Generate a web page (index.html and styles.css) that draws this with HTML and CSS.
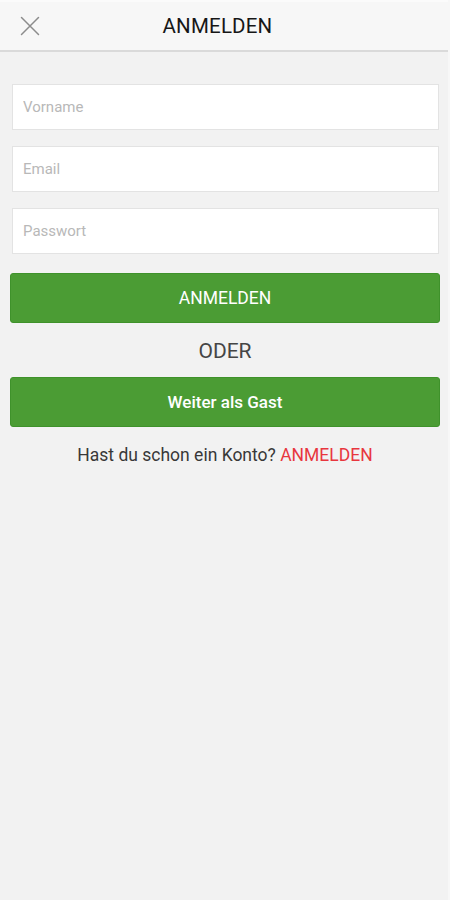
FILE: index.html
```html
<!DOCTYPE html>
<html lang="de">
<head>
<meta charset="utf-8">
<title>Anmelden</title>
<link rel="stylesheet" href="styles.css">
</head>
<body>
<div class="app">
  <header class="topbar">
    <button class="close" aria-label="Schließen">
      <svg width="20" height="20" viewBox="0 0 20 20"><path d="M1.5 1.5 L18.5 18.5 M18.5 1.5 L1.5 18.5" stroke="#8c8c8c" stroke-width="1.5" fill="none" stroke-linecap="round"/></svg>
    </button>
    <h1 class="title">ANMELDEN</h1>
    <span class="spacer"></span>
  </header>
  <main class="form">
    <div class="fields">
      <input class="field" type="text" placeholder="Vorname">
      <input class="field" type="email" placeholder="Email">
      <input class="field" type="password" placeholder="Passwort">
    </div>
    <button class="btn btn-caps">ANMELDEN</button>
    <div class="or">ODER</div>
    <button class="btn btn-guest">Weiter als Gast</button>
    <p class="account">Hast du schon ein Konto? <a class="link" href="#">ANMELDEN</a></p>
  </main>
</div>
</body>
</html>
```

FILE: styles.css
```css
html, body {
  margin: 0;
  padding: 0;
  background: #f7f7f7;
}
body {
  font-family: Roboto, "Liberation Sans", Arial, sans-serif;
}
.app {
  width: 448px;
  min-height: 900px;
  background: #f2f2f2;
}
.topbar {
  height: 48px;
  display: grid;
  grid-template-columns: 60px 1fr 73px;
  align-items: center;
  background: #f7f7f7;
  border-top: 2px solid #fbfbfb;
  border-bottom: 2px solid #dadada;
}
.close {
  border: 0;
  background: transparent;
  padding: 0 0 0 20px;
  margin: 0;
  height: 48px;
  display: flex;
  align-items: center;
  justify-content: flex-start;
}
.close svg {
  display: block;
}
.title {
  margin: 0;
  text-align: center;
  font-size: 20.5px;
  font-weight: 400;
  color: #161616;
  letter-spacing: 0.2px;
}
.form {
  padding: 32px 8px 0 10px;
  display: flex;
  flex-direction: column;
}
.fields {
  display: flex;
  flex-direction: column;
  gap: 16px;
  padding: 0 1px 0 2px;
}
.field {
  height: 46px;
  box-sizing: border-box;
  border: 1px solid #e3e3e3;
  background: #ffffff;
  padding: 0 10px;
  font-family: Roboto, "Liberation Sans", Arial, sans-serif;
  font-size: 15px;
  color: #333;
  outline: none;
  border-radius: 0;
}
.field::placeholder {
  color: #b8b8b8;
}
.btn {
  height: 50px;
  border: 1px solid #3f922b;
  border-radius: 3px;
  background: #4b9c34;
  color: #ffffff;
  font-family: Roboto, "Liberation Sans", Arial, sans-serif;
  cursor: pointer;
}
.btn-caps {
  margin-top: 19px;
  font-size: 17.5px;
  font-weight: 400;
}
.btn-guest {
  font-size: 17px;
  font-weight: 500;
}
.or {
  text-align: center;
  font-size: 21px;
  color: #454545;
  line-height: 28px;
  margin: 14px 0 12px;
}
.account {
  margin: 16px 0 0;
  text-align: center;
  font-size: 17.5px;
  line-height: 24px;
  color: #383838;
}
.link {
  color: #e8363e;
  text-decoration: none;
}
```
